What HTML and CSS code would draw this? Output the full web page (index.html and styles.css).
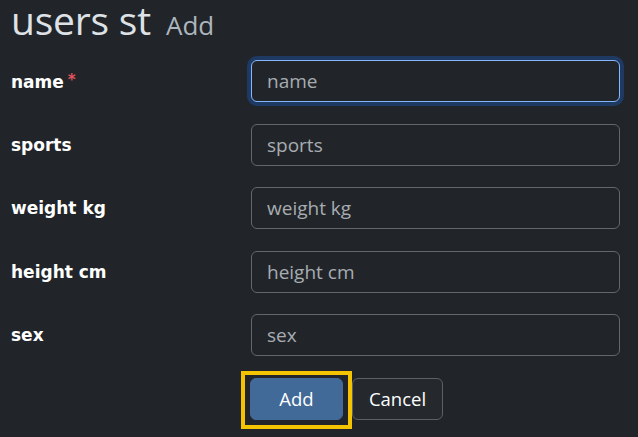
FILE: index.html
```html
<!DOCTYPE html>
<html lang="en">
<head>
<meta charset="utf-8">
<title>users st Add</title>
<link rel="stylesheet" href="styles.css">
</head>
<body>
<div class="page">
  <h1 class="title"><span class="main">users st</span><small class="sub">Add</small></h1>
  <form class="form">
    <label class="label" for="f-name">name<span class="req">*</span></label>
    <input class="input focused" id="f-name" placeholder="name">
    <label class="label" for="f-sports">sports</label>
    <input class="input" id="f-sports" placeholder="sports">
    <label class="label" for="f-weight">weight kg</label>
    <input class="input" id="f-weight" placeholder="weight kg">
    <label class="label" for="f-height">height cm</label>
    <input class="input" id="f-height" placeholder="height cm">
    <label class="label" for="f-sex">sex</label>
    <input class="input" id="f-sex" placeholder="sex">
    <div class="actions">
      <span class="highlight"><button type="button" class="btn btn-primary">Add</button></span>
      <button type="button" class="btn btn-secondary">Cancel</button>
    </div>
  </form>
</div>
</body>
</html>
```
FILE: styles.css
```css
html, body {
  margin: 0;
  padding: 0;
  background: #212529;
  color: #dee2e6;
  font-family: "Open Sans", "Noto Sans", sans-serif;
}
.page {
  padding: 0 18px 0 11px;
}
.title {
  margin: 0;
  display: flex;
  align-items: baseline;
  gap: 15px;
  height: 40px;
  font-weight: 400;
  color: #dee2e6;
}
.main {
  font-size: 39px;
  line-height: 40px;
  letter-spacing: -0.2px;
}
.sub {
  font-size: 26px;
  line-height: 26px;
  color: #adb5bd;
}
.form {
  margin-top: 20px;
  display: grid;
  grid-template-columns: 240px 1fr;
  row-gap: 21.5px;
  align-items: center;
}
.label {
  font-family: "DejaVu Sans", Verdana, sans-serif;
  font-weight: 700;
  font-size: 17px;
  color: #ffffff;
}
.req {
  color: #e0525c;
  margin-left: 4px;
  font-size: 15px;
  vertical-align: 3px;
}
.input {
  box-sizing: border-box;
  height: 42px;
  width: 100%;
  margin: 0;
  padding: 0 15px;
  background: #212529;
  border: 1px solid #63676c;
  border-radius: 6px;
  font-family: "Open Sans", "Noto Sans", sans-serif;
  font-size: 19px;
  color: #dee2e6;
  outline: none;
}
.input::placeholder {
  color: #a7acb1;
}
.input.focused {
  border-color: #86b7fe;
  box-shadow: 0 0 0 4px #1e3a62;
}
.actions {
  grid-column: 2;
  display: flex;
  align-items: flex-start;
}
.highlight {
  display: inline-flex;
  margin-left: -10px;
  margin-top: -7px;
  padding: 3px 5px 5px 5px;
  border: 4px solid #f5c400;
}
.btn {
  box-sizing: border-box;
  height: 42px;
  border-radius: 6px;
  font-family: "Open Sans", "Noto Sans", sans-serif;
  font-size: 18.5px;
  color: #ffffff;
  cursor: pointer;
}
.btn-primary {
  width: 93px;
  background: #416a98;
  border: 1px solid #416a98;
}
.btn-secondary {
  width: 91px;
  background: #25292e;
  border: 1px solid #5c6066;
}
```
